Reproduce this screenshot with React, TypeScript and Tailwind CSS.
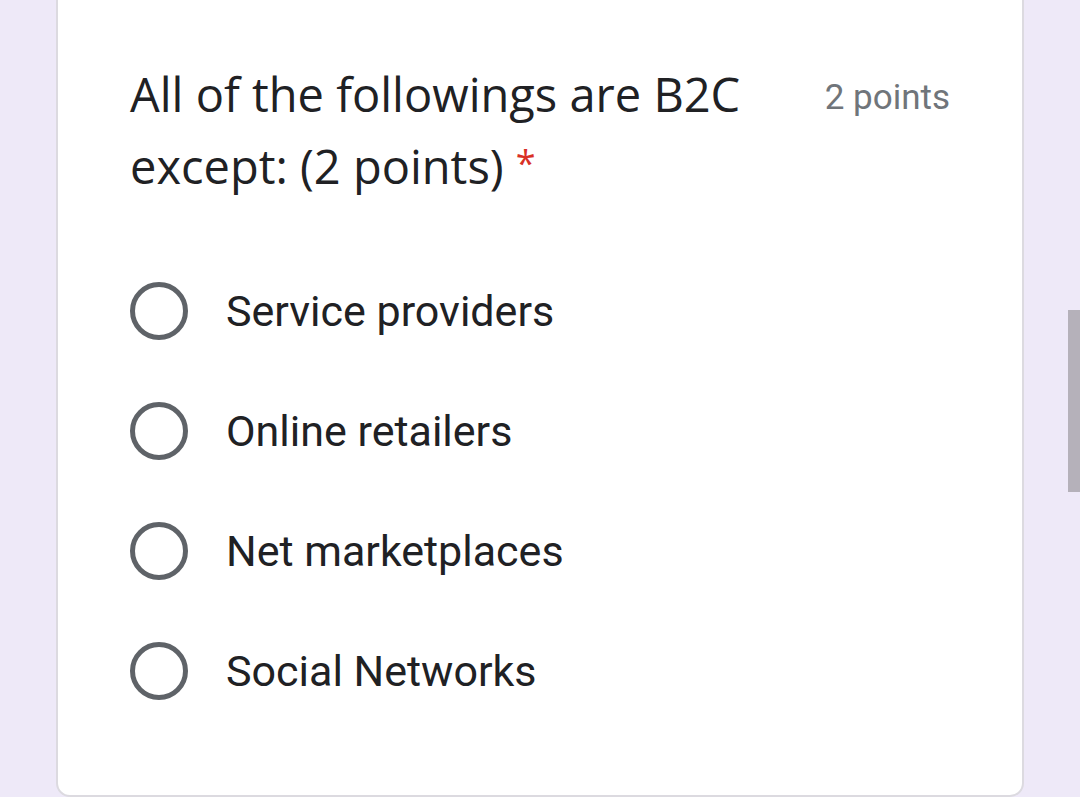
import React from 'react';

const options = ['Service providers', 'Online retailers', 'Net marketplaces', 'Social Networks'];

const Radio: React.FC = () => (
    <span className="w-[58px] h-[58px] rounded-full border-[5px] border-[#5f6368] shrink-0" />
);

export default function App() {
    return (
        <div className="w-[1080px] h-[797px] overflow-hidden bg-[#eee9f8] flex relative">
            {/* Question card */}
            <div className="ml-[56px] w-[968px] h-[810px] -mt-[13px] bg-white border-2 border-[#dcdae0] rounded-[14px] pl-[72px] pr-[72px] pt-[69px]">
                <div className="flex items-start justify-between">
                    <h2
                        className="text-[47px] leading-[72px] text-[#202124] w-[660px]"
                        style={{ fontFamily: '"Open Sans", Roboto, sans-serif' }}
                    >
                        All of the followings are B2C except: (2 points)
                        <span className="ml-[12px] text-[#d93025] text-[36px] leading-none align-[8px]">*</span>
                    </h2>
                    <span
                        className="mt-[4px] text-[35px] leading-[72px] text-[#70757a]"
                        style={{ fontFamily: 'Roboto, sans-serif' }}
                    >
                        2 points
                    </span>
                </div>

                <div className="mt-[80px] flex flex-col gap-[62px]">
                    {options.map((opt) => (
                        <label key={opt} className="flex items-center gap-[38px]">
                            <Radio />
                            <span
                                className="text-[43px] text-[#202124] leading-[58px]"
                                style={{ fontFamily: 'Roboto, sans-serif' }}
                            >
                                {opt}
                            </span>
                        </label>
                    ))}
                </div>
            </div>

            {/* Scrollbar thumb */}
            <div className="absolute right-0 top-[310px] w-[12px] h-[182px] bg-[#b5b1ba]" />
        </div>
    );
}
